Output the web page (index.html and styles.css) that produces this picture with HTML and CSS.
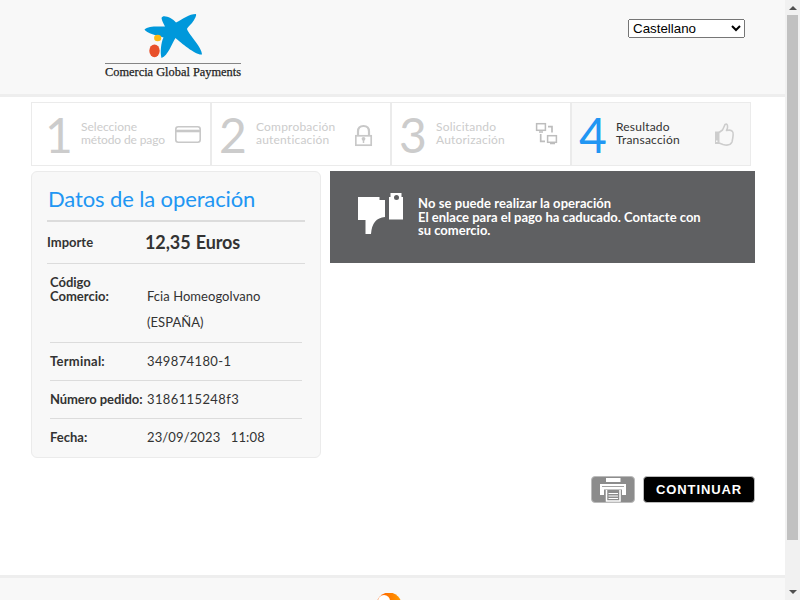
FILE: index.html
```html
<!DOCTYPE html>
<html lang="es">
<head>
<meta charset="utf-8">
<title>Resultado Transacción</title>
<link rel="stylesheet" href="styles.css">
</head>
<body>
<div class="page">
  <header class="header">
    <svg class="logo" width="140" height="70" viewBox="104 12 140 70">
      <path fill="#0098db" d="M161.500 18C163 14 172 18 176 22.500C183 19 189 14 196 14Q197 16 192 23Q187 28 187 29C189 35 202 47 202 54.500C197 56 181 43 175.500 38C172 43 168 56 161.500 58C160 53 161 42 163.500 37.500C158 36 146 33 144.500 29.500C148 25.500 159 26.500 165 26.500Q162 21 161.500 18Z"/>
      <ellipse cx="157.700" cy="38" rx="3.600" ry="3.200" fill="#fdb913"/>
      <ellipse cx="154.500" cy="50.800" rx="5.200" ry="6.400" fill="#e8502a"/>
      <path d="M105 63.500H241" stroke="#858585"/>
      <text x="105" y="75.500" textLength="136" lengthAdjust="spacingAndGlyphs" class="logo-text">Comercia Global Payments</text>
    </svg>
    <select class="language"><option>Castellano</option></select>
  </header>

  <ol class="steps">
    <li class="step first">
      <span class="num">1</span><span class="label"><span>Seleccione</span><br><span class="tight">método de pago</span></span>
      <svg class="icon" width="26" height="40" viewBox="175 115 26 40"><rect x="175.800" y="126.800" width="24.400" height="15.400" rx="2.500" fill="none" stroke="#c8c8c8" stroke-width="1.600"/><path d="M176 131H200" stroke="#c8c8c8" stroke-width="2.600"/></svg>
    </li>
    <li class="step second">
      <span class="num">2</span><span class="label wide">Comprobación<br>autenticación</span>
      <svg class="icon" width="18" height="40" viewBox="355 115 18 40"><rect x="355.800" y="135.800" width="15.400" height="9.400" fill="none" stroke="#c8c8c8" stroke-width="1.700"/><path d="M358 136V131.500Q358 126 363.500 126T369 131.500V136" fill="none" stroke="#c8c8c8" stroke-width="2.200"/><path d="M363.500 138V143" stroke="#c8c8c8" stroke-width="1.500"/><circle cx="363.500" cy="138.800" r="1.900" fill="#c8c8c8"/></svg>
    </li>
    <li class="step third">
      <span class="num">3</span><span class="label wide">Solicitando<br>Autorización</span>
      <svg class="icon" width="23" height="40" viewBox="535 115 23 40"><g fill="none" stroke="#bdbdbd" stroke-width="1.500"><rect x="536.600" y="123.700" width="8.800" height="6.600"/><rect x="547.600" y="135.700" width="8.800" height="6.600"/><path d="M539 132H543M550 143.500H555"/><path d="M548 126.700H552V132.500M540.700 134V141.300H545" stroke-width="1.700"/></g></svg>
    </li>
    <li class="step active">
      <span class="num">4</span><span class="label wide">Resultado<br>Transacción</span>
      <svg class="icon" width="20" height="40" viewBox="715 115 20 40"><path d="M719 132.500L722.500 130Q724 127 725 124.500Q728 123 727.500 128L726.500 130.500Q731 129.500 732.500 131.500Q734 133 732 142Q730 146.500 723 144.500L719 143" fill="none" stroke="#cdcdcd" stroke-width="1.600" stroke-linejoin="round"/><path fill-rule="evenodd" fill="#cdcdcd" d="M715 131.500H719.500V144H715ZM716 140.500V142H717.500V140.500Z"/></svg>
    </li>
  </ol>

  <main class="main">
    <section class="card">
      <h1 class="title">Datos de la operación</h1>
      <div class="amount"><span class="amount-label">Importe</span><span class="amount-value">12,35&nbsp;<i class="gap"></i>Euros</span></div>
      <dl class="rows">
        <div class="row shop"><dt>Código<br>Comercio:</dt><dd>Fcia Homeogolvano<br>(ESPAÑA)</dd></div>
        <div class="row"><dt class="loose">Terminal:</dt><dd class="digits">349874180-1</dd></div>
        <div class="row"><dt class="narrow">Número pedido:</dt><dd class="digits">3186115248f3</dd></div>
        <div class="row"><dt>Fecha:</dt><dd class="date">23/09/2023 &nbsp; 11:08</dd></div>
      </dl>
    </section>
    <section class="side">
      <div class="message">
        <svg class="thumb-icon" width="46" height="42" viewBox="358 193 46 42"><path fill="#fff" d="M358 197H379.500V200H385V217Q372 218 371 234H365.500V220H358ZM390.500 193H401.500V197H403V219.500H389V197H390.500Z"/><circle cx="396.500" cy="197.500" r="2.500" fill="#5f6062"/></svg>
        <p class="message-text"><span class="lead">No se puede realizar la operación</span><br>El enlace para el pago ha caducado. Contacte con<br>su comercio.</p>
      </div>
      <div class="actions">
        <button class="print" aria-label="Imprimir"><svg width="42" height="25" viewBox="592 477 42 25"><path fill="#fff" d="M606 478H620.500V482H606ZM600 484H626V495H622V489.500H604V495H600Z"/><path d="M602 486.500H624" stroke="#8c8c8c" stroke-width=".8"/><path d="M606.500 490V501H620V490" fill="#8c8c8c" stroke="#fff" stroke-width="1.500"/><path d="M608.500 493.500H618M608.500 496H618M608.500 498.500H618" stroke="#fff" stroke-width="1.200"/></svg></button>
        <button class="continue">CONTINUAR</button>
      </div>
    </section>
  </main>

  <footer class="footer">
    <svg width="26" height="24" viewBox="376 593 26 24"><defs><linearGradient id="sun"><stop offset="0" stop-color="#ff5a00"/><stop offset="1" stop-color="#ff9c00"/></linearGradient></defs><circle cx="389" cy="605" r="12.500" fill="url(#sun)"/><ellipse cx="384" cy="601" rx="6" ry="6" fill="#fff"/></svg>
  </footer>
</div>
<div class="scrollbar"><i class="arrow up"></i><div class="thumb"></div><i class="arrow down"></i></div>
</body>
</html>
```
FILE: styles.css
```css
* { box-sizing: border-box; }
body { margin: 0; width: 800px; height: 600px; overflow: hidden; display: flex; background: #fff; color: #333; font-family: Lato, sans-serif; font-size: 13px; }
.page { width: 785px; height: 600px; display: flex; flex-direction: column; overflow: hidden; }
.header { height: 97px; flex: none; display: flex; align-items: flex-start; justify-content: space-between; padding: 12px 40px 0 104px; background: #f8f8f8; border-bottom: 3px solid #eee; }
.logo { display: block; overflow: visible; }
.logo-text { font: 13px "Liberation Serif", serif; fill: #222; stroke: #222; stroke-width: .25px; }
.language { margin-top: 7px; width: 117px; height: 19px; font-family: "Liberation Sans", sans-serif; font-size: 13.333px; }
.steps { list-style: none; margin: 5px 0 0 31px; padding: 0; width: 720px; height: 64px; flex: none; display: flex; }
.step { width: 180px; display: flex; align-items: flex-start; border: 1px solid #ebebeb; padding: 0 13px 0 7px; color: #ccc; }
.step.first { padding: 0 9px 0 13px; }
.step.second { padding-right: 17px; }
.step.third { padding-right: 12px; }
.num { font-size: 48px; line-height: 64px; width: 37px; }
.first .num { width: 36px; }
.label { font-size: 12px; line-height: 13px; padding-top: 17px; white-space: nowrap; }
.label.wide { letter-spacing: .2px; }
.tight { letter-spacing: -.12px; }
.icon { margin: 12px 0 0 auto; flex: none; }
.active { background: #f8f8f8; color: #333; padding-right: 15px; }
.active .num { color: #2196f3; }
.main { display: flex; gap: 9px; margin: 5px 30px 0 31px; height: 404px; flex: none; }
.card { width: 290px; height: 287px; padding: 0 15px; background: #f8f8f8; border: 1px solid #ebebeb; border-radius: 6px; }
.title { margin: 0; height: 50px; padding: 13px 0 0 1px; border-bottom: 2px solid #dcdcdc; color: #2196f3; font-size: 22px; line-height: 28px; font-weight: 400; letter-spacing: -.12px; }
.amount { height: 42px; display: flex; align-items: center; padding-bottom: 2px; border-bottom: 1px solid #dcdcdc; font-weight: 700; }
.amount-label { width: 98px; }
.amount-value { font-size: 18px; letter-spacing: -.1px; }
.gap { display: inline-block; width: 1px; }
.rows { margin: 0 3px; }
.row { display: flex; height: 38px; align-items: center; padding-bottom: 2px; border-bottom: 1px solid #dcdcdc; }
.row:last-child { border-bottom: 0; }
.row dt { width: 97px; flex: none; font-weight: 700; line-height: 14px; white-space: nowrap; }
.row dt.loose { letter-spacing: .25px; }
.row dt.narrow { letter-spacing: -.08px; }
.row dd { margin: 0; white-space: nowrap; }
.row dd.digits { letter-spacing: .38px; }
.row dd.date { letter-spacing: .13px; }
.row.shop { height: 79px; align-items: flex-start; }
.shop dt { padding-top: 11px; }
.shop dd { line-height: 26px; padding-top: 19px; letter-spacing: .05px; }
.side { width: 425px; display: flex; flex-direction: column; align-items: flex-end; }
.message { width: 425px; height: 92px; display: flex; align-items: flex-start; padding: 22px 28px; background: #5f6062; color: #fff; }
.thumb-icon { flex: none; margin-right: 14px; }
.message-text { margin: 4px 0 0; font-size: 13px; line-height: 13.5px; font-weight: 700; white-space: nowrap; }
.lead { letter-spacing: .07px; }
.actions { display: flex; gap: 8px; margin-top: 213px; }
.actions button { height: 27px; padding: 0; border: 1px solid #bbb; border-radius: 4px; }
.print { width: 44px; background: #8c8c8c; }
.print svg { display: block; }
.actions .continue { width: 112px; background: #000; color: #fff; font: 700 13px "Liberation Sans", sans-serif; letter-spacing: .9px; }
.footer { flex: 1; background: #f8f8f8; border-top: 3px solid #eee; padding: 15px 0 0 376px; }
.scrollbar { width: 15px; height: 600px; background: #f1f1f1; display: flex; flex-direction: column; align-items: center; }
.thumb { width: 11px; height: 525px; margin: 5px 0 50px; background: #c1c1c1; }
.arrow { width: 0; height: 0; border: 4px solid transparent; }
.up { margin-top: 6px; border-top: 0; border-bottom-color: #505050; }
.down { border-bottom: 0; border-top-color: #505050; }
```
